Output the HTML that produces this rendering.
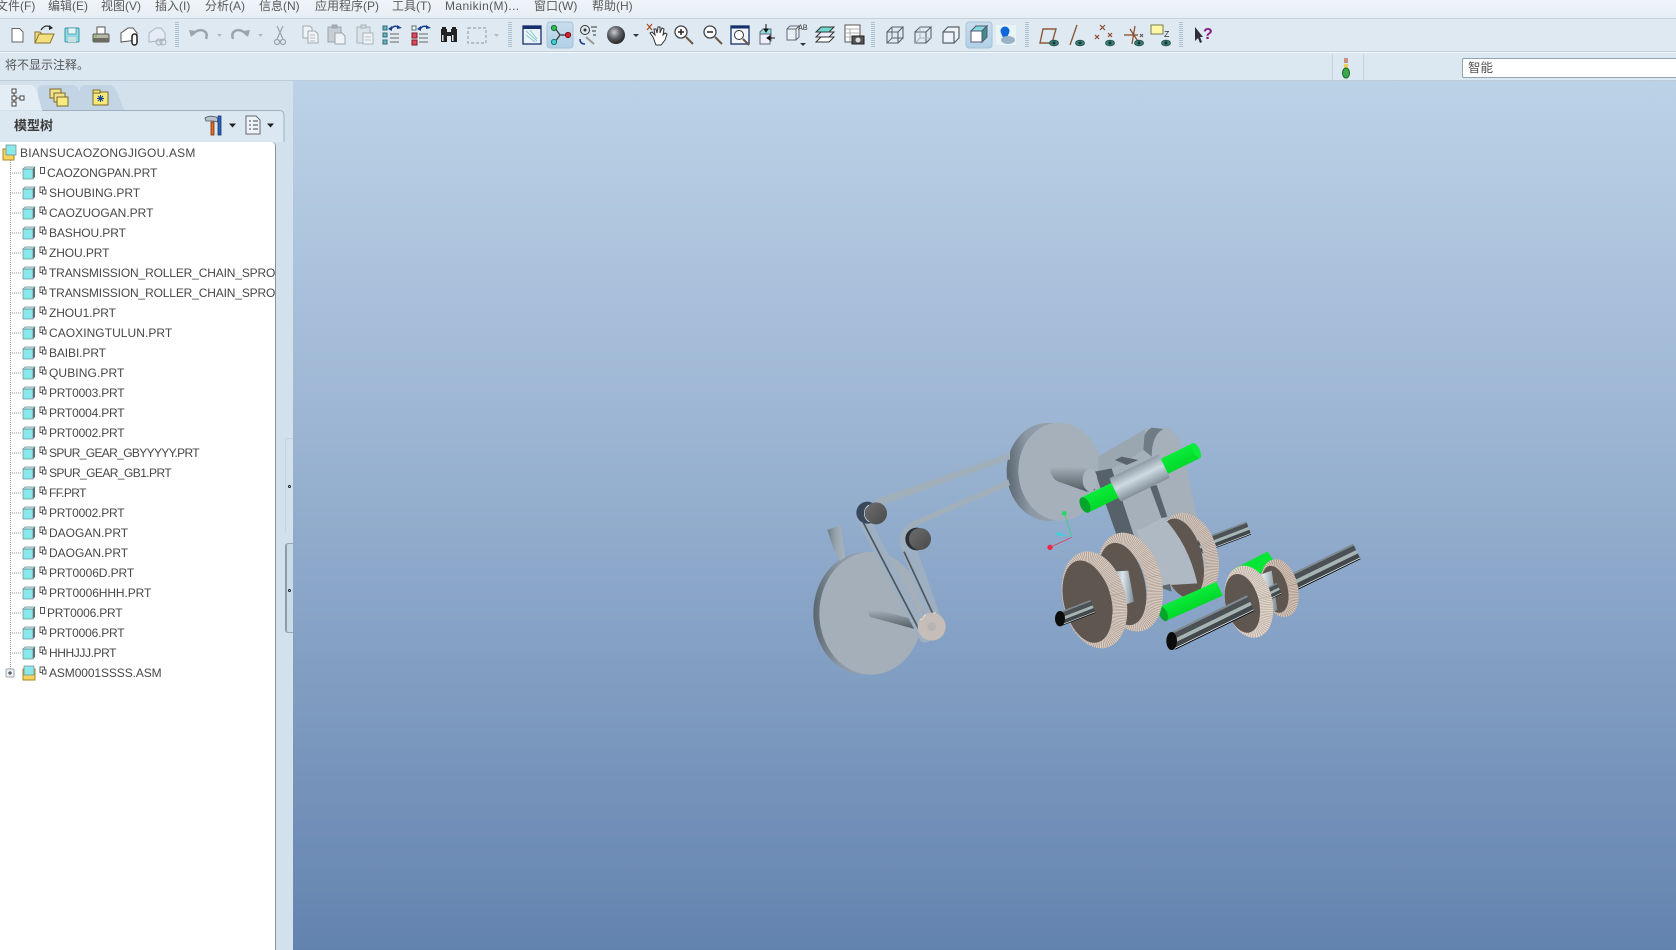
<!DOCTYPE html>
<html lang="zh"><head><meta charset="utf-8"><title>Pro/E</title>
<style>
html,body{margin:0;padding:0;background:#dbe7f1;overflow:hidden}
#p{position:relative;width:1676px;height:950px;overflow:hidden;font-family:"Liberation Sans","Noto Sans CJK SC",sans-serif;color:#4a4a4a}
.a{position:absolute;white-space:nowrap}
#mb{left:0;top:0;width:1676px;height:18px;background:linear-gradient(#eff4f9,#e6eef5);border-bottom:1px solid #c4d2de}
#tb{left:0;top:19px;width:1676px;height:32px;background:#dfe9f2;border-bottom:1px solid #c3d1dd}
#l2{left:0;top:52px;width:1676px;height:1px;background:#f4f8fb}
#sb{left:0;top:53px;width:1676px;height:27px;background:#dce8f1;border-bottom:1px solid #bccbd8}
.m{top:-2px;font-size:12px;line-height:16px;color:#5a5a5a}
#vp{left:293px;top:81px;width:1383px;height:869px;background:linear-gradient(#bcd2e7,#9cb5d3 40%,#6383af 100%)}
#lp{left:0;top:81px;width:293px;height:869px;background:#d3e1ed}
#tr{left:0;top:142px;width:275px;height:808px;background:#fff;border-right:1px solid #8496a5;border-top-right-radius:4px;overflow:hidden}
.r{position:absolute;left:0;margin-top:1px;font-size:12px;letter-spacing:-.1px;line-height:20px;color:#474747;white-space:nowrap}
</style></head><body><div id="p">
<div class="a" id="mb"></div><div class="a" id="tb"></div><div class="a" id="l2"></div><div class="a" id="sb"></div>
<span class="a m" style="left:-4px;top:-2px">文件(F)</span>
<span class="a m" style="left:48px">编辑(E)</span>
<span class="a m" style="left:101px">视图(V)</span>
<span class="a m" style="left:155px">插入(I)</span>
<span class="a m" style="left:205px">分析(A)</span>
<span class="a m" style="left:259px">信息(N)</span>
<span class="a m" style="left:315px">应用程序(P)</span>
<span class="a m" style="left:392px">工具(T)</span>
<span class="a m" style="left:445px;letter-spacing:.4px">Manikin(M)...</span>
<span class="a m" style="left:534px">窗口(W)</span>
<span class="a m" style="left:592px">帮助(H)</span>
<span class="a" style="left:5px;top:57px;font-size:12px;line-height:16px;color:#555">将不显示注释。</span>
<div class="a" style="left:1332px;top:54px;width:30px;height:26px;border-left:1px solid #c6d4df;border-right:1px solid #c6d4df"></div>
<div class="a" style="left:1462px;top:58px;width:230px;height:18px;background:#fff;border:1px solid #8fa3b2;border-radius:2px"></div>
<span class="a" style="left:1468px;top:60px;font-size:12.5px;line-height:16px;color:#555">智能</span>

<div class="a" id="lp"></div>
<div class="a" id="vp"></div>

<!-- toolbar icons -->
<svg class="a" style="left:0;top:0" width="1400" height="81" viewBox="0 0 1400 81">
<defs>
<radialGradient id="sph" cx=".4" cy=".35" r=".7"><stop offset="0" stop-color="#c8cdd2"/><stop offset=".5" stop-color="#5b5e62"/><stop offset="1" stop-color="#1e2022"/></radialGradient>
<linearGradient id="hl" x1="0" y1="0" x2="0" y2="1"><stop offset="0" stop-color="#c9ddec"/><stop offset="1" stop-color="#b1d0e6"/></linearGradient>
<g id="sep"><line x1="0" y1="22" x2="0" y2="48" stroke="#7f96aa" stroke-dasharray="1 1"/><line x1="2" y1="22" x2="2" y2="48" stroke="#7f96aa" stroke-dasharray="1 1"/></g>
<g id="eye"><ellipse cx="0" cy="0" rx="4.500" ry="2.800" fill="#3b7d75" stroke="#1f4c48" stroke-width=".8"/><circle r="1.400" fill="#0f2f2c"/></g>
<g id="wire"><path d="M-8,-4 h11 v11 h-11z M-8,-4 l5,-5 h11 l-5,5 M3,7 l5,-5 v-11" fill="none" stroke="#59636c" stroke-width="1.100"/></g>
</defs>
<use href="#sep" x="176"/><use href="#sep" x="509"/><use href="#sep" x="872"/><use href="#sep" x="1026"/><use href="#sep" x="1180"/>
<rect x="547" y="22" width="26" height="26" rx="3" fill="url(#hl)" stroke="#a6c2d6"/>
<rect x="966" y="22" width="26" height="26" rx="3" fill="url(#hl)" stroke="#a6c2d6"/>
<path d="M12,28.500 h7.500 l3.500,3.500 v10 h-11z" fill="#fff" stroke="#666"/>
<g transform="translate(45,35)"><path d="M-10,8 l-0,-11 h5 l2,2 h9 v3" fill="#f2dc82" stroke="#8a7430"/><path d="M-10,8 l4,-9 h15 l-4,9z" fill="#f3df7d" stroke="#8a7430"/><path d="M-4,-5 q4,-6 9,-3" fill="none" stroke="#333" stroke-width="1.300"/><path d="M4,-10 l4,3 l-4,2z" fill="#222"/></g>
<g transform="translate(72,35)"><rect x="-7" y="-7" width="14" height="14" rx="1" fill="#8edce2" stroke="#3d93a3"/><rect x="-4" y="-7" width="8" height="6" fill="#e6f6f7" stroke="#3d93a3" stroke-width=".7"/><rect x="-4" y="2" width="8" height="5" fill="#cfdfe6"/></g>
<g transform="translate(101,35)"><rect x="-4" y="-8" width="8" height="7" fill="#fff" stroke="#555"/><rect x="-8" y="-1" width="16" height="8" rx="1" fill="#b9b6a4" stroke="#555"/><rect x="-8" y="3" width="16" height="4" fill="#6b6b60"/><circle cx="-5" cy="1" r="1" fill="#4c6"/></g>
<g transform="translate(129,35)"><path d="M-8,7 v-9 l7,-5 h5 l4,5 v7z" fill="#fff" stroke="#555"/><rect x="3" y="-1" width="5" height="11" rx="2.500" fill="#fff" stroke="#222" stroke-width="1.500"/></g>
<g transform="translate(157,35)" opacity=".45"><path d="M-8,7 v-9 l7,-5 h5 l4,5 v7z" fill="#eef" stroke="#777"/><circle cx="2" cy="7" r="3" fill="none" stroke="#666"/><circle cx="6" cy="7" r="3" fill="none" stroke="#666"/></g>
<path d="M192,35 q6,-7 12,-4 q4,2 2,8" fill="none" stroke="#9aa5ae" stroke-width="2.500"/><path d="M189,30 l7,1 l-5,6z" fill="#9aa5ae"/>
<path d="M217,34 l5,0 l-2.500,3z" fill="#b0bbc4"/>
<path d="M247,35 q-6,-7 -12,-4 q-4,2 -2,8" fill="none" stroke="#9aa5ae" stroke-width="2.500"/><path d="M250,30 l-7,1 l5,6z" fill="#9aa5ae"/>
<path d="M258,34 l5,0 l-2.500,3z" fill="#b0bbc4"/>
<g transform="translate(280,35)" fill="none" stroke="#97a2ab" stroke-width="1.200"><path d="M-3,-9 L3,4 M3,-9 L-3,4"/><circle cx="-3" cy="7" r="2.500"/><circle cx="3" cy="7" r="2.500"/></g>
<g transform="translate(310,35)" fill="#f0f4f7" stroke="#a0aab2"><path d="M-7,-9 h7 l2,2 v10 h-9z"/><path d="M-2,-4 h7 l3,3 v9 h-10z"/><path d="M0,0 h5 M0,3 h5 M0,6 h5" stroke-width=".8"/></g>
<g transform="translate(337,35)" stroke="#9aa5ad"><rect x="-9" y="-8" width="13" height="15" fill="#c8ced3"/><rect x="-5" y="-10" width="5" height="3" fill="#aab"/><path d="M-2,-2 h7 l3,3 v8 h-10z" fill="#f0f4f7"/></g>
<g transform="translate(365,35)" stroke="#a9b3bb"><rect x="-8" y="-8" width="13" height="16" fill="#dbe3e9"/><rect x="-4" y="-10" width="5" height="3" fill="#cdd"/><rect x="-2" y="-2" width="10" height="11" fill="#eef3f6"/><path d="M0,2 h6 M0,5 h6" stroke-width=".8"/></g>
<g transform="translate(392,35)"><rect x="-9" y="-9" width="4" height="4" fill="#6fb6ba" stroke="#2f6b75"/><rect x="-9" y="-2" width="4" height="4" fill="#6fb6ba" stroke="#2f6b75"/><rect x="-9" y="5" width="4" height="4" fill="#6fb6ba" stroke="#2f6b75"/><path d="M-2,-1 h9 M-2,3 h9 M-2,7 h9" stroke="#666"/><path d="M-1,-6 q4,-5 8,-1" fill="none" stroke="#173f8f" stroke-width="1.500"/><path d="M5,-10 l5,3 l-5,1z" fill="#173f8f"/><path d="M-4,-6 l4,-3 l0,5z" fill="#173f8f"/></g>
<g transform="translate(421,35)"><rect x="-9" y="-9" width="4" height="4" fill="#dfe" stroke="#667"/><rect x="-9" y="-2" width="5" height="5" fill="#e0495a" stroke="#7a1d28"/><rect x="-9" y="5" width="5" height="5" fill="#e0495a" stroke="#7a1d28"/><path d="M-2,-1 h9 M-2,3 h9 M-2,7 h9" stroke="#666"/><path d="M-1,-6 q4,-5 8,-1" fill="none" stroke="#173f8f" stroke-width="1.500"/><path d="M5,-10 l5,3 l-5,1z" fill="#173f8f"/><path d="M-4,-6 l4,-3 l0,5z" fill="#173f8f"/></g>
<g transform="translate(449,35)" fill="#222"><rect x="-8" y="-6" width="6" height="13"/><rect x="2" y="-6" width="6" height="13"/><rect x="-2" y="-3" width="4" height="4"/><rect x="-7" y="-8" width="4" height="3"/><rect x="3" y="-8" width="4" height="3"/><rect x="-7" y="0" width="1.500" height="6" fill="#ddd"/><rect x="3" y="0" width="1.500" height="6" fill="#ddd"/></g>
<rect x="468" y="28" width="18" height="15" fill="none" stroke="#9aa5ae" stroke-width="1.200" stroke-dasharray="3 2"/>
<path d="M494,34 l5,0 l-2.500,3z" fill="#b0bbc4"/>
<g transform="translate(532,35)"><rect x="-9" y="-9" width="18" height="18" fill="#eaf2f8" stroke="#16306c" stroke-width="1.300"/><rect x="-9" y="-9" width="18" height="3" fill="#16306c"/><path d="M-6,-4 L5,6 M-2,-5 L5,4 M-6,0 L3,7" stroke="#7dc8c8" stroke-width=".9"/></g>
<g transform="translate(560,35)" fill="none"><path d="M-5,-7 L0,0 L-5,7 M0,0 h8" stroke="#333" stroke-width="1.200"/><circle cx="-6" cy="-7" r="2.600" fill="#2bbf55" stroke="#1a6e30"/><circle cx="-6" cy="7" r="2.600" fill="#41cfd0" stroke="#1b7475"/><circle cx="8" cy="0" r="2.600" fill="#d72030" stroke="#7a0e18"/></g>
<g transform="translate(588,35)" fill="none" stroke="#333"><circle cx="-3" cy="-5" r="4.500"/><circle cx="-3" cy="-5" r="1" fill="#333"/><path d="M3,-8 h6 M4,-4 h4 M5,0 h3"/><path d="M-2,2 L6,9" stroke="#999" stroke-width="2"/><path d="M-8,4 q0,5 5,5" stroke="#173f8f" stroke-width="1.500"/></g>
<circle cx="616" cy="35" r="9" fill="url(#sph)"/><path d="M633,34 l6,0 l-3,3z" fill="#333"/>
<g transform="translate(658,35)"><path d="M-5,2 l-3,-4 l2,-1 l3,3 l-1,-6 l2,0 l1,4 l1,-6 l2,0 l0,6 l2,-5 l2,1 l-1,6 l2,-2 l2,1 l-2,6 l-4,5 h-5 z" fill="#fff" stroke="#333"/><path d="M-11,-11 l5,6 M-6,-11 l-5,6" stroke="#a8532a" stroke-width="1.300"/></g>
<g id="zi"><circle cx="681" cy="32" r="6" fill="#fff" stroke="#444" stroke-width="1.300"/><path d="M678,32 h6 M681,29 v6" stroke="#222" stroke-width="1.500"/><path d="M686,37 l7,7" stroke="#6b5a46" stroke-width="2"/></g>
<circle cx="710" cy="32" r="6" fill="#fff" stroke="#444" stroke-width="1.300"/><path d="M707,32 h6" stroke="#222" stroke-width="1.500"/><path d="M715,37 l7,7" stroke="#6b5a46" stroke-width="2"/>
<g transform="translate(740,35)"><rect x="-9" y="-9" width="18" height="18" fill="#f0f5f9" stroke="#16306c" stroke-width="1.300"/><rect x="-9" y="-9" width="18" height="2.500" fill="#16306c"/><circle cx="-1" cy="0" r="4.500" fill="#fff" stroke="#333"/><path d="M3,4 l6,6" stroke="#6b5a46" stroke-width="2"/></g>
<g transform="translate(766,36)"><path d="M-6,-4 l3,-3 h8 v12 h-11z" fill="#8fdfe2" stroke="#667"/><rect x="-6" y="-2" width="10" height="10" fill="#eef" stroke="#667"/><path d="M0,-12 v7 M-2,-7 h4 l-2,3z M9,2 h-7 M4,0 v4 l-3,-2z" stroke="#111" fill="#111"/></g>
<g transform="translate(796,34)"><path d="M-9,-5 l3,-3 h9 v11 l-3,3 h-9z" fill="#e8f2f5" stroke="#667"/><path d="M-9,-5 h9 l3,-3 M0,-5 v11" fill="none" stroke="#667"/><text x="2" y="-4" font-family="Liberation Mono" font-size="8" fill="#444">AB</text><path d="M4,9 h6 l-3,3z" fill="#333"/></g>
<g transform="translate(825,35)" stroke="#333" fill="#fff"><path d="M-9,7 l5,-5 h13 l-5,5z"/><path d="M-9,2 l5,-5 h13 l-5,5z" fill="#eef"/><path d="M-9,-3 l5,-5 h13 l-5,5z" fill="#6fd8cf"/></g>
<g transform="translate(853,34)"><rect x="-8" y="-9" width="15" height="17" fill="#fff" stroke="#555"/><path d="M-8,-5 h15 M-8,-1 h15 M-8,3 h15 M-3,-5 v13" stroke="#999" stroke-width=".8"/><rect x="-1" y="2" width="12" height="8" fill="#555" stroke="#222"/><circle cx="5" cy="6" r="2.500" fill="#ddd"/></g>
<use href="#wire" x="895" y="36"/><path d="M892,27 v11 h11 M892,38 l-5,5" fill="none" stroke="#59636c" stroke-width=".9"/>
<use href="#wire" x="923" y="36"/><path d="M920,27 v11 h11 M920,38 l-5,5" fill="none" stroke="#a8b2ba" stroke-width=".9"/>
<g transform="translate(951,36)"><path d="M-8,-4 h11 v11 h-11z M-8,-4 l5,-5 h11 v11 l-5,5" fill="#eef3f7" stroke="#59636c" stroke-width="1.200"/></g>
<g transform="translate(979,35)"><path d="M-8,-4 l5,-5 h11 l-5,5z" fill="#7fdcd8" stroke="#557"/><path d="M3,-4 l5,-5 v11 l-5,5z" fill="#3e8f88" stroke="#557"/><rect x="-8" y="-4" width="11" height="11" fill="#fff" stroke="#557"/></g>
<g transform="translate(1006,35)"><rect x="-10" y="-10" width="20" height="20" fill="#eaf3f8"/><circle cx="-1" cy="-4" r="4.500" fill="#1068d8"/><path d="M-5,-2 l4,9 l4,-9z" fill="#1068d8"/><ellipse cx="2" cy="5" rx="7" ry="4" fill="#9ab3c6"/></g>
<g transform="translate(1049,35)"><path d="M-9,8 l3,-14 h13 l-4,14z" fill="none" stroke="#8b5a3c" stroke-width="1.400"/><use href="#eye" x="5" y="8"/></g>
<g transform="translate(1075,35)"><path d="M-5,10 l7,-20" stroke="#8b5a3c" stroke-width="1.400"/><use href="#eye" x="5" y="8"/></g>
<g transform="translate(1104,35)"><path d="M-4,-10 l5,5 M1,-10 l-5,5 M-9,0 l4,4 M-5,0 l-4,4 M4,-2 l4,4 M8,-2 l-4,4" stroke="#8b4a2a" stroke-width="1.200"/><use href="#eye" x="6" y="8"/></g>
<g transform="translate(1133,35)"><path d="M-9,0 h14 M2,-9 l-3,18 M-3,-6 l9,14" stroke="#8b4a2a" stroke-width="1.200"/><path d="M7,-1 l3,3 M10,-1 l-3,3" stroke="#555"/><use href="#eye" x="6" y="8"/></g>
<g transform="translate(1159,35)"><rect x="-8" y="-10" width="12" height="9" fill="#fdf8a8" stroke="#7a7a50"/><text x="5" y="2" font-family="Liberation Mono" font-size="9" fill="#333">Z</text><use href="#eye" x="7" y="8"/></g>
<g transform="translate(1200,35)"><path d="M-5,-8 v14 l3,-3 l2,5 l2,-1 l-2,-5 h3z" fill="#2c3036"/><text x="3" y="4" font-family="Liberation Sans" font-weight="bold" font-size="16" fill="#8a1a84">?</text></g>
<!-- traffic light -->
<rect x="1344" y="58" width="4" height="5" fill="#c8907f"/><rect x="1344" y="64" width="4" height="5" fill="#e8d060"/><ellipse cx="1346" cy="73" rx="3.500" ry="5" fill="#3aa84c" stroke="#1c6a2c"/>
</svg>

<!-- tabs and panel head -->
<svg class="a" style="left:0;top:81px" width="293" height="62" viewBox="0 81 293 62">
<path d="M38,110 L38,88 Q39,85 44,85 L73,85 Q77,85 80,92 L88,110Z" fill="#c3d5e5"/>
<path d="M80,110 L80,88 Q81,85 86,85 L110,85 Q114,85 117,92 L124,110Z" fill="#c3d5e5"/>
<path d="M0,110 V85 H31 Q35,85 37,92 L42,110Z" fill="#e3edf5"/>
<path d="M0,111 H280 Q284,111 284,115 V142 H0Z" fill="#dbe7f1"/>
<path d="M42,110.500 H280 Q284,111 284,115 V142" fill="none" stroke="#9fb1c0"/>
<g fill="#fff" stroke="#444"><rect x="12" y="89" width="4" height="4"/><rect x="12" y="96" width="4" height="4"/><rect x="20" y="96" width="4" height="4"/><rect x="12" y="102" width="4" height="4"/></g>
<path d="M16,98 h4 M14,93 v3 M14,100 v2" stroke="#444"/>
<g stroke="#7a6a2a"><rect x="50" y="89" width="11" height="9" fill="#f3e28c"/><rect x="54" y="93" width="11" height="9" fill="#f3e28c"/><rect x="57" y="97" width="11" height="9" fill="#f8ea80"/></g>
<rect x="93" y="92" width="15" height="13" fill="#f8e878" stroke="#7a6a2a"/><rect x="93" y="90" width="7" height="3" fill="#f8e878" stroke="#7a6a2a"/><path d="M100.500,95 v7 M97,98.500 h7 M98,96 l5,5 M103,96 l-5,5" stroke="#1040a0"/>
<g transform="translate(214,125)"><path d="M-9,-7 q5,-3 11,-1 l2,2 l-1,3 l-3,-1 h-8z" fill="#b9c3cb" stroke="#556" stroke-width=".8"/><rect x="-3" y="-3" width="3" height="13" fill="#e0691e" stroke="#7a3410" stroke-width=".8"/><rect x="4" y="-9" width="3" height="19" fill="#2a62b5" stroke="#143570" stroke-width=".8"/></g>
<path d="M229,123.500 h7 l-3.500,4z M267,123.500 h7 l-3.500,4z" fill="#222"/>
<g transform="translate(253,125)"><path d="M-7,-9 h10 l4,4 v14 h-14z" fill="#eef3f7" stroke="#667"/><path d="M-4,-4 h2 M0,-4 h5 M-4,0 h2 M0,0 h5 M-4,4 h2 M0,4 h5" stroke="#445"/></g>
</svg>
<span class="a" style="left:14px;top:117px;font-size:13px;line-height:17px;font-weight:700;color:#3c3c3c">模型树</span>

<!-- tree -->
<div class="a" id="tr">
<svg class="a" style="left:0;top:0" width="60" height="560" viewBox="0 142 60 560">
<defs>
<g id="c" transform="translate(0,-1)"><rect x="0" y="-4" width="10" height="10" fill="#8be8ea" stroke="#6e8a90" stroke-width=".7"/><path d="M0,-4 l2,-2 h10 l-2,2z" fill="#c4f0f0" stroke="#6e8a90" stroke-width=".7"/><path d="M10,-4 l2,-2 v10 l-2,2z" fill="#5f6e75"/></g>
<g id="i"><rect x="0" y="0" width="4.500" height="5.500" fill="#fff" stroke="#444" stroke-width=".9"/><rect x="2.500" y="3" width="3.500" height="4" fill="#fff" stroke="#444" stroke-width=".9"/></g>
<path id="h" d="M0,0 h12" stroke="#999" stroke-dasharray="1 1"/>
</defs>
<path d="M10.500,160 V672" stroke="#999" stroke-dasharray="1 1"/>
<g transform="translate(3,153)"><rect x="0" y="-4" width="11" height="11" fill="#f4d35e" stroke="#a78826"/><path d="M3,-8 h10 v10 h-10z" fill="#8be8ea" stroke="#6e8a90" stroke-width=".7"/></g>
<use href="#h" x="10" y="173"/><use href="#c" x="23" y="174"/><rect x="40.500" y="167.500" width="4" height="6" fill="#fff" stroke="#444" stroke-width=".9"/>
<use href="#h" x="10" y="193"/><use href="#c" x="23" y="194"/><use href="#i" x="40" y="187"/>
<use href="#h" x="10" y="213"/><use href="#c" x="23" y="214"/><use href="#i" x="40" y="207"/>
<use href="#h" x="10" y="233"/><use href="#c" x="23" y="234"/><use href="#i" x="40" y="227"/>
<use href="#h" x="10" y="253"/><use href="#c" x="23" y="254"/><use href="#i" x="40" y="247"/>
<use href="#h" x="10" y="273"/><use href="#c" x="23" y="274"/><use href="#i" x="40" y="267"/>
<use href="#h" x="10" y="293"/><use href="#c" x="23" y="294"/><use href="#i" x="40" y="287"/>
<use href="#h" x="10" y="313"/><use href="#c" x="23" y="314"/><use href="#i" x="40" y="307"/>
<use href="#h" x="10" y="333"/><use href="#c" x="23" y="334"/><use href="#i" x="40" y="327"/>
<use href="#h" x="10" y="353"/><use href="#c" x="23" y="354"/><use href="#i" x="40" y="347"/>
<use href="#h" x="10" y="373"/><use href="#c" x="23" y="374"/><use href="#i" x="40" y="367"/>
<use href="#h" x="10" y="393"/><use href="#c" x="23" y="394"/><use href="#i" x="40" y="387"/>
<use href="#h" x="10" y="413"/><use href="#c" x="23" y="414"/><use href="#i" x="40" y="407"/>
<use href="#h" x="10" y="433"/><use href="#c" x="23" y="434"/><use href="#i" x="40" y="427"/>
<use href="#h" x="10" y="453"/><use href="#c" x="23" y="454"/><use href="#i" x="40" y="447"/>
<use href="#h" x="10" y="473"/><use href="#c" x="23" y="474"/><use href="#i" x="40" y="467"/>
<use href="#h" x="10" y="493"/><use href="#c" x="23" y="494"/><use href="#i" x="40" y="487"/>
<use href="#h" x="10" y="513"/><use href="#c" x="23" y="514"/><use href="#i" x="40" y="507"/>
<use href="#h" x="10" y="533"/><use href="#c" x="23" y="534"/><use href="#i" x="40" y="527"/>
<use href="#h" x="10" y="553"/><use href="#c" x="23" y="554"/><use href="#i" x="40" y="547"/>
<use href="#h" x="10" y="573"/><use href="#c" x="23" y="574"/><use href="#i" x="40" y="567"/>
<use href="#h" x="10" y="593"/><use href="#c" x="23" y="594"/><use href="#i" x="40" y="587"/>
<use href="#h" x="10" y="613"/><use href="#c" x="23" y="614"/><rect x="40.500" y="607.500" width="4" height="6" fill="#fff" stroke="#444" stroke-width=".9"/>
<use href="#h" x="10" y="633"/><use href="#c" x="23" y="634"/><use href="#i" x="40" y="627"/>
<use href="#h" x="10" y="653"/><use href="#c" x="23" y="654"/><use href="#i" x="40" y="647"/>
<rect x="6" y="669" width="8" height="8" rx="1" fill="#eef2f6" stroke="#9aa7b0"/><path d="M8,673 h4 M10,671 v4" stroke="#333"/>
<g transform="translate(23,674)"><rect x="0" y="-5" width="12" height="11" fill="#f4d35e" stroke="#a78826"/><rect x="1" y="-8" width="10" height="9" fill="#8be8ea" stroke="#6e8a90" stroke-width=".7"/></g><use href="#i" x="40" y="667"/>
</svg>
<div class="r" style="top:0;left:20px;letter-spacing:.19px">BIANSUCAOZONGJIGOU.ASM</div>
<div class="r" style="top:20px;left:47px">CAOZONGPAN.PRT</div>
<div class="r" style="top:40px;left:49px;letter-spacing:0">SHOUBING.PRT</div>
<div class="r" style="top:60px;left:49px;letter-spacing:0">CAOZUOGAN.PRT</div>
<div class="r" style="top:80px;left:49px">BASHOU.PRT</div>
<div class="r" style="top:100px;left:49px">ZHOU.PRT</div>
<div class="r" style="top:120px;left:49px;letter-spacing:-.15px">TRANSMISSION_ROLLER_CHAIN_SPROCKET.PRT</div>
<div class="r" style="top:140px;left:49px;letter-spacing:-.15px">TRANSMISSION_ROLLER_CHAIN_SPROCKET.PRT</div>
<div class="r" style="top:160px;left:49px">ZHOU1.PRT</div>
<div class="r" style="top:180px;left:49px;letter-spacing:.05px">CAOXINGTULUN.PRT</div>
<div class="r" style="top:200px;left:49px">BAIBI.PRT</div>
<div class="r" style="top:220px;left:49px;letter-spacing:.1px">QUBING.PRT</div>
<div class="r" style="top:240px;left:49px;letter-spacing:-.2px">PRT0003.PRT</div>
<div class="r" style="top:260px;left:49px;letter-spacing:-.2px">PRT0004.PRT</div>
<div class="r" style="top:280px;left:49px;letter-spacing:-.2px">PRT0002.PRT</div>
<div class="r" style="top:300px;left:49px;letter-spacing:-.65px">SPUR_GEAR_GBYYYYY.PRT</div>
<div class="r" style="top:320px;left:49px;letter-spacing:-.57px">SPUR_GEAR_GB1.PRT</div>
<div class="r" style="top:340px;left:49px;letter-spacing:-.6px">FF.PRT</div>
<div class="r" style="top:360px;left:49px;letter-spacing:-.2px">PRT0002.PRT</div>
<div class="r" style="top:380px;left:49px;letter-spacing:0">DAOGAN.PRT</div>
<div class="r" style="top:400px;left:49px;letter-spacing:0">DAOGAN.PRT</div>
<div class="r" style="top:420px;left:49px">PRT0006D.PRT</div>
<div class="r" style="top:440px;left:49px">PRT0006HHH.PRT</div>
<div class="r" style="top:460px;left:47px;letter-spacing:-.2px">PRT0006.PRT</div>
<div class="r" style="top:480px;left:49px;letter-spacing:-.2px">PRT0006.PRT</div>
<div class="r" style="top:500px;left:49px;letter-spacing:-.4px">HHHJJJ.PRT</div>
<div class="r" style="top:520px;left:49px">ASM0001SSSS.ASM</div>
</div>

<!-- sash -->
<div class="a" style="left:285px;top:438px;width:8px;height:95px;border-left:1px solid #c5d3df;border-top:1px solid #c5d3df;border-radius:2px 0 0 2px;box-sizing:border-box"></div>
<div class="a" style="left:285px;top:543px;width:8px;height:90px;background:#cadbe8;border-left:2px solid #8c9ca9;border-top:1px solid #98a8b5;border-bottom:1px solid #98a8b5;border-radius:3px 0 0 3px;box-sizing:border-box"></div>
<div class="a" style="left:288px;top:485px;width:3px;height:3px;background:#e8f0f5;border:1px solid #223;border-radius:50%;box-sizing:border-box"></div>
<div class="a" style="left:288px;top:589px;width:3px;height:3px;background:#e8f0f5;border:1px solid #223;border-radius:50%;box-sizing:border-box"></div>

<!-- 3D -->
<svg class="a" style="left:0;top:0" width="1676" height="950" viewBox="0 0 1676 950">
<defs>
<linearGradient id="rim" x1="0" y1="0" x2="1" y2="0"><stop offset="0" stop-color="#5a6670"/><stop offset=".25" stop-color="#8b98a3"/><stop offset="1" stop-color="#a5b0bb"/></linearGradient>
<linearGradient id="sh" x1="0" y1="0" x2="0" y2="1"><stop offset="0" stop-color="#aab5bd"/><stop offset=".5" stop-color="#7c878f"/><stop offset="1" stop-color="#50595f"/></linearGradient>
<linearGradient id="cone" x1="0" y1="0" x2="1" y2="0"><stop offset="0" stop-color="#6f7b85"/><stop offset=".5" stop-color="#9aa6af"/><stop offset="1" stop-color="#a9b4bc"/></linearGradient>
<linearGradient id="cyl" x1="0" y1="0" x2="0" y2="1"><stop offset="0" stop-color="#8e9aa4"/><stop offset=".45" stop-color="#cfdbe3"/><stop offset="1" stop-color="#828e98"/></linearGradient>
<linearGradient id="gr" x1="0" y1="0" x2="0" y2="1"><stop offset="0" stop-color="#0cec3a"/><stop offset="1" stop-color="#00d82a"/></linearGradient>
<linearGradient id="pul" x1="0" y1="0" x2="1" y2="1"><stop offset="0" stop-color="#6d6d6d"/><stop offset="1" stop-color="#4a4a4a"/></linearGradient>
<linearGradient id="hub" x1="0" y1="0" x2="1" y2="0"><stop offset="0" stop-color="#8c9aa5"/><stop offset=".5" stop-color="#dbe6ec"/><stop offset="1" stop-color="#7b8892"/></linearGradient>
<g id="sft"><rect x="0" y="-26" width="600" height="6" fill="#7f8b92"/><rect x="0" y="-20" width="600" height="16" fill="#4b5154"/><rect x="0" y="-4" width="600" height="11" fill="#a6b5b2"/><rect x="0" y="7" width="600" height="14" fill="#42484b"/><rect x="0" y="21" width="600" height="2.500" fill="#e8eef0"/><rect x="0" y="23.500" width="600" height="2.500" fill="#000"/></g>
</defs>
<!-- left group -->
<g transform="translate(790,410) scale(.33333)">
<g transform="rotate(-3 790 185)"><ellipse cx="775" cy="185" rx="125" ry="147" fill="url(#rim)"/></g>
<path d="M660,128 L250,270 L270,288 L660,148Z" fill="#a1afbb"/>
<path d="M655,208 L368,335 Q332,355 328,395 L345,430 L380,390 L372,350 L660,226Z" fill="#a1afbb"/>
<ellipse cx="222" cy="610" rx="152" ry="183" fill="url(#rim)"/>
<ellipse cx="243" cy="610" rx="155" ry="184" fill="#a4afba"/>
<ellipse cx="810" cy="185" rx="125" ry="147" fill="#a5b0bb" transform="rotate(-3 810 185)"/>
<path d="M112,360 L152,345 L165,442 L152,452 L130,415Z" fill="url(#cone)"/>
<path d="M235,608 Q236,596 250,596 L385,632 L378,658 L245,622 Q236,620 235,608Z" fill="url(#sh)"/>
<path d="M785,190 Q782,168 800,168 L900,180 L900,225 L885,232 L800,212 Q788,205 785,190Z" fill="url(#sh)"/>
<path d="M222,330 L405,680" stroke="#9dafc0" stroke-width="36" stroke-linecap="round" fill="none"/>
<path d="M350,395 L432,632" stroke="#9dafc0" stroke-width="44" stroke-linecap="round" fill="none"/>
<path d="M220,338 L392,668 M342,425 L428,610" stroke="#4b555e" stroke-width="5" fill="none"/>
<circle cx="232" cy="308" r="33" fill="#39475a"/>
<circle cx="258" cy="310" r="33" fill="url(#pul)"/><circle cx="252" cy="310" r="29" fill="none" stroke="#e6eef5" stroke-width="2" stroke-dasharray="60 130" stroke-dashoffset="-60"/>
<circle cx="380" cy="387" r="34" fill="#2a2f35"/><circle cx="390" cy="387" r="33" fill="url(#pul)"/>
<circle cx="425" cy="650" r="42" fill="#c6bdb8"/><circle cx="425" cy="650" r="13" fill="#b5b3b3"/>
<path d="M390,630 l8,-5 l8,-12 M432,612 l4,-6" stroke="#e9e4df" stroke-width="3"/>
<path d="M823,310 L845,378" stroke="#1fdc68" stroke-width="2"/><path d="M808,372 L845,380" stroke="#2fd8e0" stroke-width="2"/><path d="M780,412 L845,382" stroke="#ee2a46" stroke-width="2"/>
<circle cx="823" cy="310" r="7" fill="#1fdc68"/><ellipse cx="808" cy="372" rx="8" ry="5" fill="#2fd8e0"/><circle cx="780" cy="412" r="8" fill="#ee2a46"/>
</g>
<!-- right group -->
<g transform="translate(1030,410) scale(.33333)">
<path d="M205,140 L350,55 L420,55 L450,90 L505,340 L545,510 L385,535 L320,420 L235,290Z" fill="#a5b0bb"/>
<path d="M335,115 Q335,70 365,53 L400,57 Q365,75 365,140Z" fill="#6f7b85"/>
<path d="M205,140 L345,58 L340,120 L280,160 L205,190Z" fill="#9aa6b0"/>
<path d="M255,150 L275,140 L325,150 L290,165Z" fill="#59636c"/>
<path d="M195,185 L245,175 L278,275 L322,408 L268,398 L228,285Z" fill="#56616a"/>
<path d="M360,230 L380,225 L412,320 L395,325Z" fill="#59636c"/>
<path d="M320,360 L410,340 L500,340 L540,500 L385,535Z" fill="#aeb9c3"/>
<g transform="translate(505,412) rotate(-21) scale(.27,.8)"><use href="#sft"/></g>
<!-- gear 3 -->
<g transform="translate(455,445) rotate(-14)">
<ellipse cx="22" cy="0" rx="66" ry="112" fill="none" stroke="#ddcfc4" stroke-width="42"/>
<ellipse cx="22" cy="0" rx="66" ry="112" fill="none" stroke="#6d6058" stroke-width="42" stroke-dasharray="2 2.500" opacity=".5"/>
<ellipse cx="0" cy="0" rx="62" ry="122" fill="#5f5650"/>
</g>
<path d="M330,360 L400,322 Q475,400 502,520 L420,525 L388,535 L325,420Z" fill="#aeb9c3"/>
<path d="M382,530 L420,522 L425,545Z" fill="#5d6871"/>
<!-- upper green shaft -->
<g transform="translate(165,285) rotate(-26)">
<rect x="0" y="-25" width="372" height="50" fill="url(#gr)"/>
<ellipse cx="0" cy="0" rx="14" ry="25" fill="#08a52c"/><ellipse cx="372" cy="0" rx="10" ry="25" fill="#0cec3a"/>
<rect x="100" y="-40" width="165" height="78" rx="6" fill="url(#cyl)"/>
</g>
<path d="M62,190 Q60,165 80,165 L190,178 L195,240 L170,245 L85,215Z" fill="url(#sh)"/>
<ellipse cx="180" cy="210" rx="22" ry="34" fill="#a9b4be"/>
<!-- lower green -->
<g transform="translate(400,612) rotate(-24)"><rect x="0" y="-24" width="185" height="46" fill="url(#gr)"/><ellipse cx="0" cy="0" rx="12" ry="23" fill="#08a52c"/></g>
<path d="M605,480 L712,425 L742,465 L690,490Z" fill="#06e636"/>
<!-- gear 2 -->
<g transform="translate(277,522) rotate(-14)">
<ellipse cx="24" cy="0" rx="70" ry="127" fill="none" stroke="#e2d4c9" stroke-width="48"/>
<ellipse cx="24" cy="0" rx="70" ry="127" fill="none" stroke="#6d6058" stroke-width="48" stroke-dasharray="2 2.500" opacity=".5"/>
<ellipse cx="0" cy="0" rx="67" ry="126" fill="#5f5650"/>
</g>
<path d="M245,485 L295,482 L312,575 L268,590 Q240,540 245,485Z" fill="url(#hub)"/>
<!-- gear 1 -->
<g transform="translate(172,575) rotate(-14)">
<ellipse cx="22" cy="0" rx="72" ry="126" fill="none" stroke="#e2d4c9" stroke-width="44"/>
<ellipse cx="22" cy="0" rx="72" ry="126" fill="none" stroke="#6d6058" stroke-width="44" stroke-dasharray="2 2.500" opacity=".5"/>
<ellipse cx="0" cy="0" rx="70" ry="126" fill="#5f5650"/>
</g>
<g transform="translate(88,628) rotate(-21) scale(.18,.8)"><use href="#sft"/></g>
<ellipse cx="90" cy="626" rx="15" ry="23" fill="#0c0c0c"/>
<!-- big shaft back -->
<g transform="translate(425,695) rotate(-26) scale(1.03,1)"><use href="#sft"/></g>
<!-- gear 5 -->
<g transform="translate(735,538) rotate(-14)">
<ellipse cx="15" cy="0" rx="38" ry="72" fill="none" stroke="#dccabd" stroke-width="32"/>
<ellipse cx="15" cy="0" rx="38" ry="72" fill="none" stroke="#6d6058" stroke-width="32" stroke-dasharray="2 2.500" opacity=".5"/>
<ellipse cx="0" cy="0" rx="38" ry="72" fill="#5f5650"/>
</g>
<path d="M660,505 L725,482 L742,600 L695,620Z" fill="url(#hub)"/>
<g transform="translate(672,572) rotate(-26) scale(.14,.7)"><use href="#sft"/></g>
<!-- gear 4 -->
<g transform="translate(637,580) rotate(-14)">
<ellipse cx="20" cy="0" rx="50" ry="90" fill="none" stroke="#e6dacf" stroke-width="40"/>
<ellipse cx="20" cy="0" rx="50" ry="90" fill="none" stroke="#6d6058" stroke-width="40" stroke-dasharray="2 3" opacity=".4"/>
<ellipse cx="0" cy="0" rx="50" ry="90" fill="#5f5650"/>
</g>
<!-- big shaft front -->
<g transform="translate(425,695) rotate(-26) scale(.44,1)"><use href="#sft"/></g>
<ellipse cx="425" cy="693" rx="16" ry="27" fill="#0c0c0c"/>
</g>
</svg>
</div></body></html>
